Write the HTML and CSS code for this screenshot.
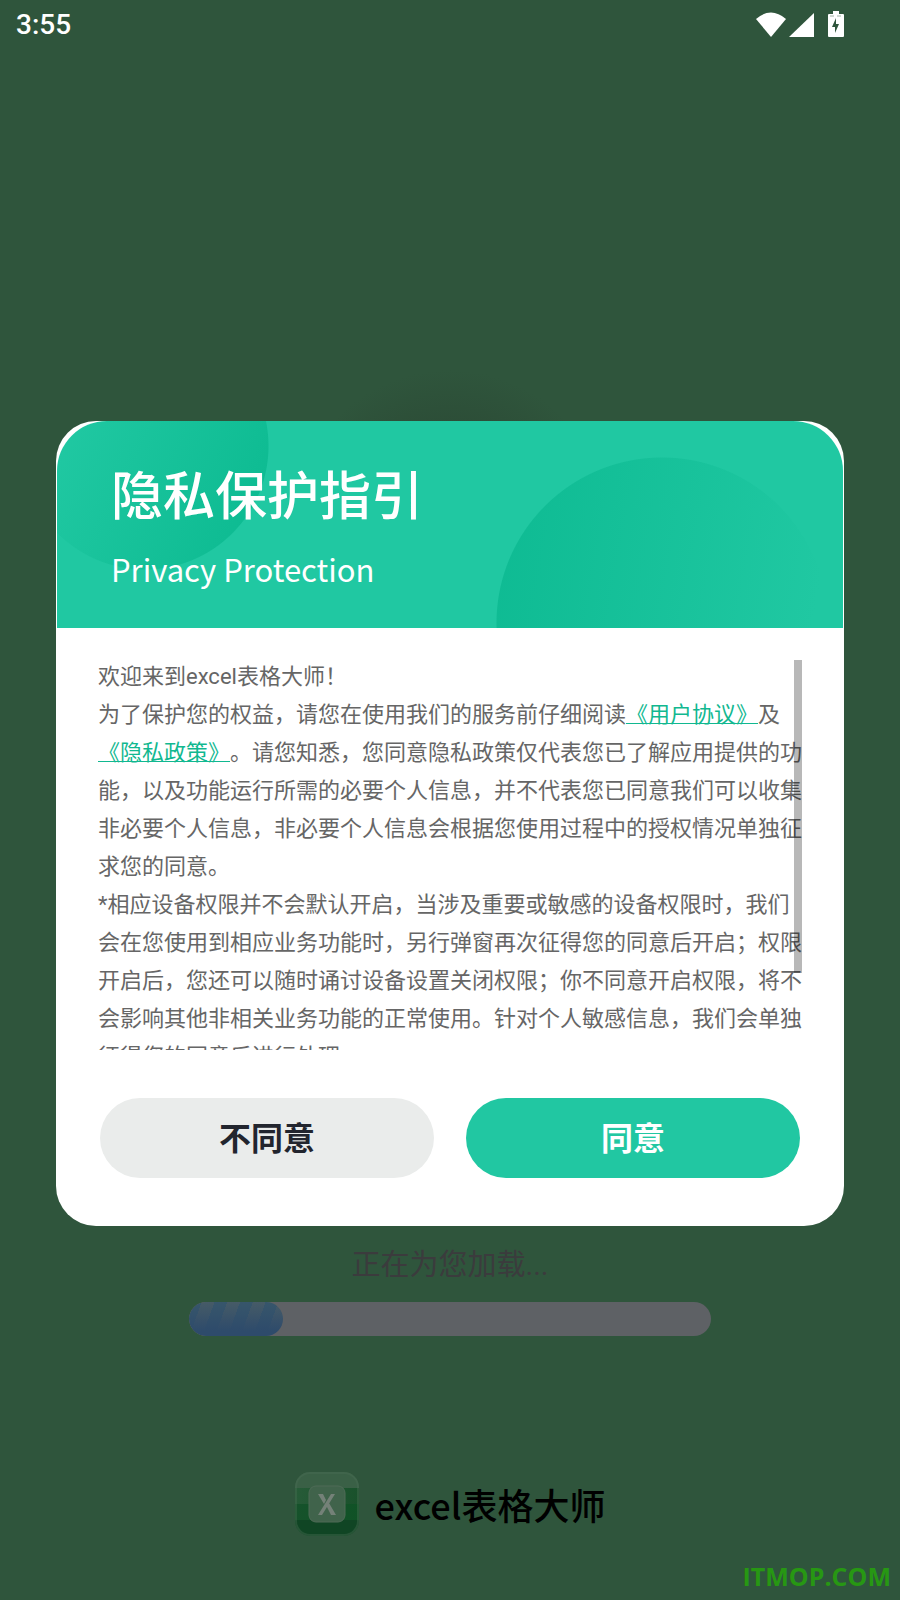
FILE: index.html
```
<!DOCTYPE html>
<html lang="zh-CN">
<head>
    <meta charset="UTF-8">
    <meta name="viewport" content="width=device-width, initial-scale=1">
    <title>excel表格大师</title>
    <link rel="stylesheet" href="styles.css">
</head>
<body>
    <header class="status-bar">
        <span class="clock">3:55</span>
        <svg class="status-icons" viewBox="0 0 90 28" aria-hidden="true">
            <path d="M1 8Q16-5 31 8L16 26Z"/>
            <path d="M59 2V26H34Z"/>
            <path d="M78 0h6v3h4q1 0 1 1v21q0 1-1 1H74q-1 0-1-1V4q0-1 1-1h4Z"/>
            <path class="bolt" d="M81 7L77 16h3v6l4-9h-3Z"/>
            <path class="band" d="M75 5h4M82 5h4"/>
        </svg>
    </header>

    <main>
        <section class="dialog" role="dialog" aria-labelledby="dialogTitle">
            <div class="banner">
                <h1 id="dialogTitle">隐私保护指引</h1>
                <p>Privacy Protection</p>
            </div>
            <div class="terms">
                <div class="terms-text">
                    <p>欢迎来到excel表格大师！</p>
                    <p>为了保护您的权益，请您在使用我们的服务前仔细阅读<a href="#agreement">《用户协议》</a>及<a href="#privacy">《隐私政策》</a>。请您知悉，您同意隐私政策仅代表您已了解应用提供的功能，以及功能运行所需的必要个人信息，并不代表您已同意我们可以收集非必要个人信息，非必要个人信息会根据您使用过程中的授权情况单独征求您的同意。</p>
                    <p>*相应设备权限并不会默认开启，当涉及重要或敏感的设备权限时，我们会在您使用到相应业务功能时，另行弹窗再次征得您的同意后开启；权限开启后，您还可以随时诵讨设备设置关闭权限；你不同意开启权限，将不会影响其他非相关业务功能的正常使用。针对个人敏感信息，我们会单独征得您的同意后进行处理</p>
                </div>
                <div class="scroll-thumb"></div>
            </div>
            <div class="actions">
                <button class="btn" type="button">不同意</button>
                <button class="btn btn-primary" type="button">同意</button>
            </div>
        </section>

        <section class="loading">
            <label for="loadProgress">正在为您加载...</label>
            <progress id="loadProgress" value="18" max="100"></progress>
        </section>
    </main>

    <footer class="brand">
        <svg class="app-icon" viewBox="0 0 64 64" aria-hidden="true">
            <defs>
                <clipPath id="iconShape"><rect width="64" height="64" rx="15"/></clipPath>
                <linearGradient id="midBand"><stop stop-color="#275b38"/><stop offset="1" stop-color="#19512b"/></linearGradient>
                <linearGradient id="lowBand"><stop stop-color="#16522b"/><stop offset="1" stop-color="#105226"/></linearGradient>
            </defs>
            <g clip-path="url(#iconShape)">
                <path fill="#3a6046" d="M0 0h64v16H0z"/>
                <path fill="url(#midBand)" d="M0 16h64v16H0z"/>
                <path fill="url(#lowBand)" d="M0 32h64v16H0z"/>
                <path fill="#104524" d="M0 48h64v16H0z"/>
            </g>
            <rect x="1" y="1" width="62" height="62" rx="14" fill="none" stroke="#4c6d55" stroke-opacity=".4" stroke-width="2"/>
            <rect x="14" y="14" width="36" height="36" rx="7" fill="#40634b" stroke="#4e6b56"/>
            <path fill="#748178" d="M23 22h5l3 6-2 4zM36 22h4L27 43h-4zM34 31l7 12h-5l-4-8z"/>
        </svg>
        <span>excel表格大师</span>
    </footer>

    <div class="watermark">ITMOP.COM</div>
</body>
</html>
```
FILE: styles.css
```
* {
    box-sizing: border-box;
}

body {
    position: relative;
    display: flex;
    flex-direction: column;
    min-height: 100vh;
    margin: 0;
    background: radial-gradient(circle at 50% 530px, #2c4d37 100px, #2f553c 160px);
    font-family: Roboto, "Noto Sans CJK SC", sans-serif;
    text-spacing-trim: space-all;
}

h1,
p {
    margin: 0;
}

.status-bar {
    display: flex;
    align-items: center;
    justify-content: space-between;
    height: 49px;
    padding: 0 55px 0 16px;
    color: #fff;
}

.clock {
    font-size: 28px;
    font-weight: 500;
}

.status-icons {
    width: 90px;
    height: 28px;
    fill: #fff;
}

.status-icons .bolt {
    fill: #2f553c;
}

.status-icons .band {
    stroke: #9fb0a4;
}

.dialog {
    margin: 372px 56px 0;
    padding: 0 1px 48px;
    border-radius: 40px;
    background: #fff;
}

/* two soft discs behind the title */
.banner {
    height: 207px;
    padding: 34px 54px 0;
    border-radius: 50px 50px 0 0;
    background:
        radial-gradient(circle 124px at 88px 25px, transparent 123px, #20c8a2 124px) 0 0 / 300px 100% no-repeat,
        linear-gradient(115deg, #20c8a2 10px, #09b88e 270px) 0 0 / 300px 100% no-repeat,
        radial-gradient(circle 166px at calc(100% - 181px) 202px, transparent 165px, #20c8a2 166px) 0 0 / 100% 100% no-repeat,
        linear-gradient(100deg, #0dba92, #20c8a2 92%) 100% 0 / 350px 100% no-repeat,
        #20c8a2;
    color: #fff;
    font-family: "Noto Sans CJK SC", sans-serif;
}

.banner h1 {
    font-size: 52px;
    font-weight: 500;
    line-height: 76px;
}

.banner p {
    font-size: 31px;
    line-height: 76px;
}

.terms {
    position: relative;
    height: 392px;
    margin: 30px 39px 0 41px;
}

.terms-text {
    height: 100%;
    overflow: hidden;
    color: #666;
    font-size: 22px;
    line-height: 38px;
}

.terms-text a {
    color: #11b890;
    text-decoration-thickness: 1px;
}

.scroll-thumb {
    position: absolute;
    top: 2px;
    right: 2px;
    width: 8px;
    height: 313px;
    background: rgba(0, 0, 0, 0.28);
}

.actions {
    display: flex;
    gap: 32px;
    margin: 48px 43px 0;
}

.btn {
    flex: 1;
    height: 80px;
    padding: 0 0 4px;
    border: none;
    border-radius: 40px;
    background: #eaeceb;
    color: #22252e;
    font-family: inherit;
    font-size: 32px;
    font-weight: 700;
    cursor: pointer;
}

.btn-primary {
    background: #21c7a2;
    color: #fff;
}

.loading {
    display: flex;
    flex-direction: column;
    align-items: center;
    gap: 16px;
    margin-top: 18px;
}

.loading label {
    color: #3b3b3d;
    font-size: 29px;
    line-height: 42px;
}

.loading progress {
    appearance: none;
    width: 58%;
    height: 34px;
    border: none;
    border-radius: 17px;
    overflow: hidden;
}

.loading progress::-webkit-progress-bar {
    background: #5e6165;
}

.loading progress::-webkit-progress-value {
    border-radius: 17px;
    background:
        linear-gradient(transparent, #2e4b6b 85%),
        repeating-linear-gradient(110deg, #37566b 0 12px, #465b67 12px 24px);
}

.brand {
    display: flex;
    align-items: center;
    justify-content: center;
    gap: 16px;
    margin-top: auto;
    padding-bottom: 64px;
    color: #000;
    font-family: "Noto Sans CJK SC", sans-serif;
    font-size: 36px;
    font-weight: 500;
    line-height: 64px;
}

.app-icon {
    width: 64px;
    height: 64px;
}

.watermark {
    position: absolute;
    right: 9px;
    bottom: 7px;
    color: #279713;
    font-family: "Open Sans", sans-serif;
    font-size: 25px;
    font-weight: 700;
}
```
